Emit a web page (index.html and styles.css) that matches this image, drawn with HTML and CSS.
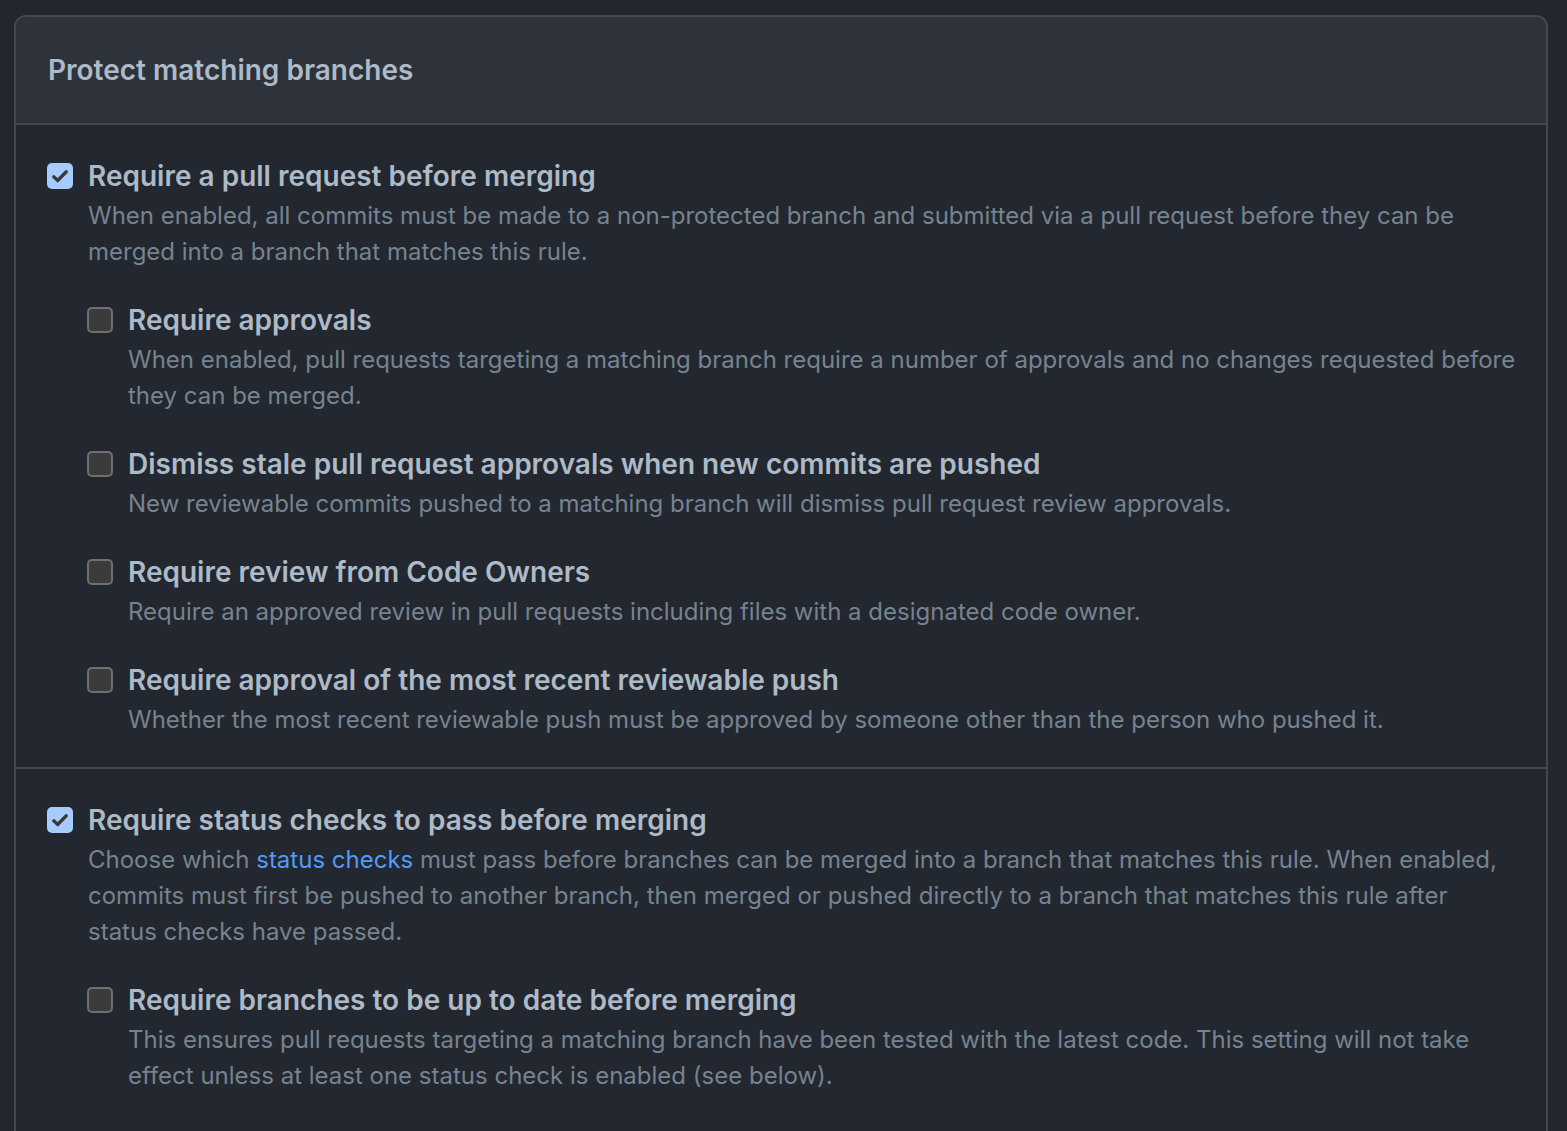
FILE: index.html
```html
<!DOCTYPE html>
<html lang="en">
<head>
<meta charset="utf-8">
<title>Protect matching branches</title>
<link rel="stylesheet" href="styles.css">
</head>
<body>
<div class="box">
  <div class="box-header">Protect matching branches</div>
  <div class="box-section">
    <div class="item">
      <span class="cb checked"><svg viewBox="0 0 16 16" width="20" height="20"><path d="M3 8.6 6.2 11.6 13 4.6" fill="none" stroke="#3a3a3a" stroke-width="2.6" stroke-linecap="round" stroke-linejoin="round"/></svg></span>
      <div class="item-body">
        <div class="item-title">Require a pull request before merging</div>
        <div class="item-desc">When enabled, all commits must be made to a non-protected branch and submitted via a pull request before they can be merged into a branch that matches this rule.</div>
        <div class="sub-list">
          <div class="item">
            <span class="cb"></span>
            <div class="item-body">
              <div class="item-title">Require approvals</div>
              <div class="item-desc">When enabled, pull requests targeting a matching branch require a number of approvals and no changes requested before they can be merged.</div>
            </div>
          </div>
          <div class="item">
            <span class="cb"></span>
            <div class="item-body">
              <div class="item-title">Dismiss stale pull request approvals when new commits are pushed</div>
              <div class="item-desc">New reviewable commits pushed to a matching branch will dismiss pull request review approvals.</div>
            </div>
          </div>
          <div class="item">
            <span class="cb"></span>
            <div class="item-body">
              <div class="item-title">Require review from Code Owners</div>
              <div class="item-desc">Require an approved review in pull requests including files with a designated code owner.</div>
            </div>
          </div>
          <div class="item">
            <span class="cb"></span>
            <div class="item-body">
              <div class="item-title">Require approval of the most recent reviewable push</div>
              <div class="item-desc">Whether the most recent reviewable push must be approved by someone other than the person who pushed it.</div>
            </div>
          </div>
        </div>
      </div>
    </div>
  </div>
  <div class="box-section">
    <div class="item">
      <span class="cb checked"><svg viewBox="0 0 16 16" width="20" height="20"><path d="M3 8.6 6.2 11.6 13 4.6" fill="none" stroke="#3a3a3a" stroke-width="2.6" stroke-linecap="round" stroke-linejoin="round"/></svg></span>
      <div class="item-body">
        <div class="item-title">Require status checks to pass before merging</div>
        <div class="item-desc">Choose which <a class="link" href="#">status checks</a> must pass before branches can be merged into a branch that matches this rule. When enabled, commits must first be pushed to another branch, then merged or pushed directly to a branch that matches this rule after status checks have passed.</div>
        <div class="sub-list">
          <div class="item">
            <span class="cb"></span>
            <div class="item-body">
              <div class="item-title">Require branches to be up to date before merging</div>
              <div class="item-desc">This ensures pull requests targeting a matching branch have been tested with the latest code. This setting will not take effect unless at least one status check is enabled (see below).</div>
            </div>
          </div>
        </div>
      </div>
    </div>
  </div>
</div>
</body>
</html>
```

FILE: styles.css
```css
html, body {
  margin: 0;
  padding: 0;
  background: #22262e;
}
body {
  padding: 15px 19px 0 14px;
  font-family: Inter, "Noto Sans", "Liberation Sans", sans-serif;
  -webkit-font-smoothing: antialiased;
}
.box {
  border: 2px solid #434851;
  border-bottom: none;
  border-radius: 12px 12px 0 0;
  background: #23272f;
  min-height: 1130px;
}
.box-header {
  background: #2e323a;
  border-radius: 10px 10px 0 0;
  border-bottom: 2px solid #434851;
  height: 108px;
  box-sizing: border-box;
  padding-left: 32px;
  display: flex;
  align-items: center;
  color: #adbac7;
  font-size: 28px;
  font-weight: 600;
}
.box-section {
  padding: 33px 28px 29px 31px;
}
.box-section + .box-section {
  border-top: 2px solid #434851;
}
.item {
  display: flex;
  gap: 15px;
  align-items: flex-start;
}
.item + .item {
  margin-top: 32px;
}
.item-body {
  flex: 1;
  min-width: 0;
}
.cb {
  flex: none;
  width: 26px;
  height: 26px;
  margin-top: 5px;
  box-sizing: border-box;
  border-radius: 5px;
  background: #3b3b3b;
  border: 2px solid #6f6f6f;
  display: flex;
  align-items: center;
  justify-content: center;
}
.cb.checked {
  background: #a8cbfe;
  border: none;
}
.item-title {
  color: #adbac7;
  font-size: 28px;
  font-weight: 600;
  line-height: 36px;
}
.item-desc {
  margin-top: 4px;
  color: #768390;
  font-size: 24px;
  line-height: 36px;
}
.link {
  color: #539bf5;
  text-decoration: none;
}
.sub-list {
  margin-top: 32px;
  margin-left: -1px;
}
```
